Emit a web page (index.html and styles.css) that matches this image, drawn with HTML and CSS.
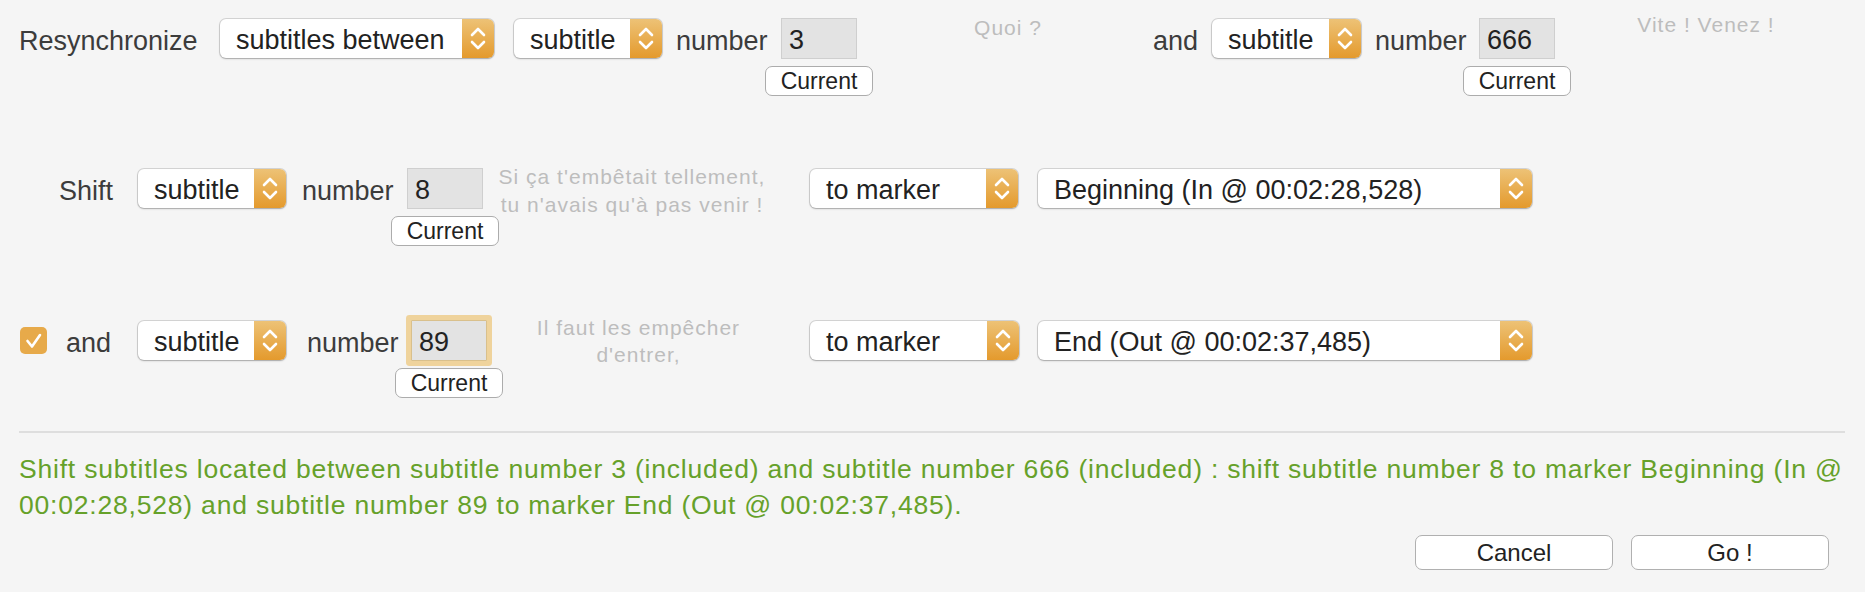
FILE: index.html
```html
<!DOCTYPE html>
<html lang="fr">

<head>
    <meta charset="UTF-8">
    <title>Resynchronize</title>
    <link rel="stylesheet" href="styles.css">
</head>

<body>
    <div class="panel">
        <!-- plage de sous-titres -->
        <div class="row">
            <span class="label label-resync">Resynchronize</span>
            <div class="popup popup-between">
                <span class="popup-text">subtitles between</span>
                <span class="stepper"><svg viewBox="0 0 32 39" width="32" height="39"><path d="M10 16 L16 10 L22 16 M10 23 L16 29 L22 23" /></svg></span>
            </div>
            <div class="popup popup-subtitle first-kind">
                <span class="popup-text">subtitle</span>
                <span class="stepper"><svg viewBox="0 0 32 39" width="32" height="39"><path d="M10 16 L16 10 L22 16 M10 23 L16 29 L22 23" /></svg></span>
            </div>
            <span class="label label-number n1">number</span>
            <div class="numfield nf1">
                <div class="numbox">3</div>
                <button class="btn-current">Current</button>
            </div>
            <div class="note note-quoi">Quoi ?</div>
            <span class="label label-and">and</span>
            <div class="popup popup-subtitle second-kind">
                <span class="popup-text">subtitle</span>
                <span class="stepper"><svg viewBox="0 0 32 39" width="32" height="39"><path d="M10 16 L16 10 L22 16 M10 23 L16 29 L22 23" /></svg></span>
            </div>
            <span class="label label-number n2">number</span>
            <div class="numfield nf2">
                <div class="numbox">666</div>
                <button class="btn-current">Current</button>
            </div>
            <div class="note note-vite">Vite ! Venez !</div>
        </div>

        <!-- premier point -->
        <div class="row row-shift">
            <span class="label label-shift">Shift</span>
            <div class="popup popup-subtitle">
                <span class="popup-text">subtitle</span>
                <span class="stepper"><svg viewBox="0 0 32 39" width="32" height="39"><path d="M10 16 L16 10 L22 16 M10 23 L16 29 L22 23" /></svg></span>
            </div>
            <span class="label label-number n3">number</span>
            <div class="numfield nf3">
                <div class="numbox">8</div>
                <button class="btn-current">Current</button>
            </div>
            <div class="note note-shift">Si ça t'embêtait tellement,<br>tu n'avais qu'à pas venir !</div>
            <div class="popup popup-marker m1">
                <span class="popup-text">to marker</span>
                <span class="stepper"><svg viewBox="0 0 32 39" width="32" height="39"><path d="M10 16 L16 10 L22 16 M10 23 L16 29 L22 23" /></svg></span>
            </div>
            <div class="popup popup-time">
                <span class="popup-text">Beginning (In @ 00:02:28,528)</span>
                <span class="stepper"><svg viewBox="0 0 32 39" width="32" height="39"><path d="M10 16 L16 10 L22 16 M10 23 L16 29 L22 23" /></svg></span>
            </div>
        </div>

        <!-- second point -->
        <div class="row row-second">
            <span class="checkbox"><svg viewBox="0 0 27 27" width="27" height="27"><path d="M7.5 14 L12 19.5 L20 8" /></svg></span>
            <span class="label label-and2">and</span>
            <div class="popup popup-subtitle">
                <span class="popup-text">subtitle</span>
                <span class="stepper"><svg viewBox="0 0 32 39" width="32" height="39"><path d="M10 16 L16 10 L22 16 M10 23 L16 29 L22 23" /></svg></span>
            </div>
            <span class="label label-number n4">number</span>
            <div class="numfield nf4">
                <div class="numbox focused">89</div>
                <button class="btn-current">Current</button>
            </div>
            <div class="note note-second">Il faut les empêcher<br>d'entrer,</div>
            <div class="popup popup-marker m2">
                <span class="popup-text">to marker</span>
                <span class="stepper"><svg viewBox="0 0 32 39" width="32" height="39"><path d="M10 16 L16 10 L22 16 M10 23 L16 29 L22 23" /></svg></span>
            </div>
            <div class="popup popup-time">
                <span class="popup-text">End (Out @ 00:02:37,485)</span>
                <span class="stepper"><svg viewBox="0 0 32 39" width="32" height="39"><path d="M10 16 L16 10 L22 16 M10 23 L16 29 L22 23" /></svg></span>
            </div>
        </div>

        <div class="separator"></div>

        <p class="summary">Shift subtitles located between subtitle number 3 (included) and subtitle number 666 (included) : shift subtitle number 8 to marker Beginning (In @ 00:02:28,528) and subtitle number 89 to marker End (Out @ 00:02:37,485).</p>

        <div class="actions">
            <button class="btn">Cancel</button>
            <button class="btn">Go !</button>
        </div>
    </div>
</body>

</html>
```

FILE: styles.css
```css
* {
    box-sizing: border-box;
}

body {
    margin: 0;
    background-color: #f5f5f5;
    font-family: "Liberation Sans", Arial, sans-serif;
    color: #3c3c3c;
}

.panel {
    width: 1865px;
    height: 592px;
    padding: 18px 0 0 19px;
}

/* lignes */
.row {
    display: flex;
    align-items: flex-start;
}

.row-shift {
    margin-top: 72px;
}

.row-second {
    margin-top: 74px;
}

.label {
    padding-top: 3px;
    font-size: 27px;
    line-height: 41px;
    white-space: nowrap;
}

.label-resync { width: 175px; }
.label-number { width: 92px; }
.label-and { width: 45px; margin-left: 10px; }
.label-shift { width: 94px; text-align: right; }
.label-and2 { width: 64px; text-align: right; }

.n1 { margin-left: 14px; }
.n2 { margin-left: 14px; }
.n3 { margin-left: 16px; }
.n4 { margin-left: 21px; }

/* menus déroulants */
.popup {
    display: flex;
    height: 39px;
    margin-top: 1px;
    background-color: #fff;
    border-radius: 6px;
    overflow: hidden;
    box-shadow: 0 0 0 1px rgba(0, 0, 0, .13), 0 1px 2px rgba(0, 0, 0, .22);
}

.popup-text {
    flex: 1;
    padding: 2px 0 0 16px;
    font-size: 27px;
    line-height: 39px;
    color: #222;
    white-space: nowrap;
    overflow: hidden;
}

.stepper {
    display: flex;
    width: 32px;
    flex-shrink: 0;
    background: linear-gradient(#edc276, #e49a2d);
}

.stepper path {
    fill: none;
    stroke: #fff;
    stroke-width: 2.6;
    stroke-linecap: round;
    stroke-linejoin: round;
}

.popup-between { width: 274px; margin-left: 26px; }
.popup-subtitle { width: 148px; }
.first-kind { margin-left: 20px; }
.second-kind { width: 149px; margin-left: 14px; }
.row-shift .popup-subtitle { margin-left: 25px; }
.row-second .popup-subtitle { margin-left: 27px; }
.popup-marker { width: 208px; }
.m1 { margin-left: 41px; }
.m2 { width: 209px; margin-left: 36px; }
.popup-time { width: 494px; margin-left: 20px; }
.row-second .popup-time { margin-left: 19px; }

/* champs numériques */
.numfield {
    display: flex;
    flex-direction: column;
    align-items: center;
    width: 76px;
}

.nf1 { margin-left: 13px; }
.nf2 { margin-left: 12px; }
.nf3 { margin-left: 13px; }
.nf4 { margin-left: 12px; }

.numbox {
    width: 76px;
    height: 41px;
    padding: 3px 0 0 7px;
    background-color: #e3e3e3;
    border: 1px solid #cfcfcf;
    font-size: 27px;
    line-height: 36px;
    color: #222;
}

.numbox.focused {
    border-color: #d9c08c;
    border-radius: 1px;
    box-shadow: 0 0 0 5px #efd39c;
}

.btn-current {
    flex-shrink: 0;
    width: 108px;
    height: 30px;
    margin-top: 7px;
    padding: 0;
    background-color: #fff;
    border: 1.5px solid #acacac;
    border-radius: 7px;
    font-family: "Liberation Sans", Arial, sans-serif;
    font-size: 23px;
    line-height: 26px;
    color: #222;
}

/* commentaires gris */
.note {
    font-size: 21px;
    letter-spacing: 1px;
    line-height: 28px;
    color: #bdbdbd;
    text-align: center;
    white-space: nowrap;
}

.note-quoi { width: 270px; margin: -4px 0 0 16px; }
.note-vite { width: 270px; margin: -7px 0 0 16px; }
.note-shift { width: 274px; margin: -5px 0 0 12px; }
.note-second { width: 271px; margin: -6px 0 0 16px; line-height: 27px; }

.checkbox {
    display: flex;
    width: 27px;
    height: 27px;
    margin: 7px 0 0 1px;
    background-color: #e7aa4a;
    border-radius: 5px;
}

.checkbox path {
    fill: none;
    stroke: #fff;
    stroke-width: 2.6;
    stroke-linecap: round;
    stroke-linejoin: round;
}

.separator {
    width: 1826px;
    height: 2px;
    margin-top: 33px;
    background-color: #dedede;
}

.summary {
    width: 1834px;
    margin: 18px 0 0;
    font-size: 26.5px;
    letter-spacing: .8px;
    line-height: 36px;
    color: #66a12a;
}

.actions {
    display: flex;
    justify-content: flex-end;
    gap: 18px;
    margin-top: 12px;
    padding-right: 36px;
}

.btn {
    width: 198px;
    height: 35px;
    padding: 0;
    background-color: #fff;
    border: 1.5px solid #b0b0b0;
    border-radius: 7px;
    font-family: "Liberation Sans", Arial, sans-serif;
    font-size: 24px;
    color: #222;
}
```
